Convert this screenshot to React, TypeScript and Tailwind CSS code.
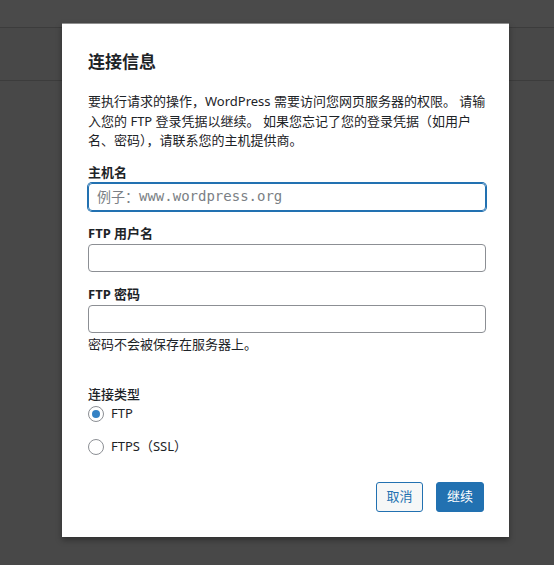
import React from "react";

const font = { fontFamily: '"Noto Sans", "Noto Sans CJK SC", sans-serif' };

function Radio({ checked, label }: { checked?: boolean; label: string }) {
  return (
    <label className="flex items-center h-[20px] text-[13px] text-[#1d2327]">
      <span className="w-[16px] h-[16px] rounded-full border border-[#8c8f94] bg-white flex items-center justify-center">
        {checked && <span className="w-[8px] h-[8px] rounded-full bg-[#3582c4]" />}
      </span>
      <span className="ml-[7px]">{label}</span>
    </label>
  );
}

export default function App() {
  return (
    <div className="relative w-[554px] h-[565px] overflow-hidden bg-[#484848]" style={font}>
      <div className="h-[27px] bg-[#4a4a4a]" />
      <div className="h-[1px] bg-[#3c3c3c]" />
      <div className="h-[52px] bg-[#484848]" />
      <div className="h-[1px] bg-[#3c3c3c]" />

      <div className="absolute left-[62px] top-[23px] w-[447px] bg-white border-t border-[#8f8f8f] shadow-[0_3px_6px_rgba(0,0,0,0.35)] pl-[26px] pr-[23px] pt-[26px] pb-[25px] text-[#1d2327]">
        <h1 className="text-[17px] leading-[24px] font-bold">连接信息</h1>
        <p className="mt-[18px] text-[13px] leading-[19.5px] whitespace-nowrap">
          要执行请求的操作，WordPress 需要访问您网页服务器的权限。 请输
          <br />
          入您的 FTP 登录凭据以继续。 如果您忘记了您的登录凭据（如用户
          <br />
          名、密码），请联系您的主机提供商。
        </p>

        <div className="mt-[11px] text-[13px] leading-[21px] font-bold">主机名</div>
        <div className="h-[28px] w-[398px] rounded-[4px] border border-[#2271b1] shadow-[0_0_0_1px_#2271b1] flex items-center pl-[8px] text-[14px] text-[#7b7f85]">
          <span>例子：</span>
          <span style={{ fontFamily: '"DejaVu Sans Mono", monospace' }}>www.wordpress.org</span>
        </div>

        <div className="mt-[12px] text-[13px] leading-[21px] font-bold">FTP 用户名</div>
        <div className="h-[28px] w-[398px] rounded-[4px] border border-[#8c8f94]" />

        <div className="mt-[12px] text-[13px] leading-[21px] font-bold">FTP 密码</div>
        <div className="h-[28px] w-[398px] rounded-[4px] border border-[#8c8f94]" />
        <p className="text-[13px] leading-[22px]">密码不会被保存在服务器上。</p>

        <div className="mt-[29px] text-[13px] leading-[20px] font-medium">连接类型</div>
        <div className="flex flex-col gap-[13px]">
          <Radio checked label="FTP" />
          <Radio label="FTPS（SSL）" />
        </div>

        <div className="mt-[25px] flex justify-end gap-[13px] mr-[2px]">
          <button className="h-[30px] w-[47px] rounded-[3px] border border-[#2271b1] bg-[#f6f7f7] text-[#2271b1] text-[13px] flex items-center justify-center">
            取消
          </button>
          <button className="h-[30px] w-[48px] rounded-[3px] border border-[#2271b1] bg-[#2271b1] text-white text-[13px] flex items-center justify-center">
            继续
          </button>
        </div>
      </div>
    </div>
  );
}
